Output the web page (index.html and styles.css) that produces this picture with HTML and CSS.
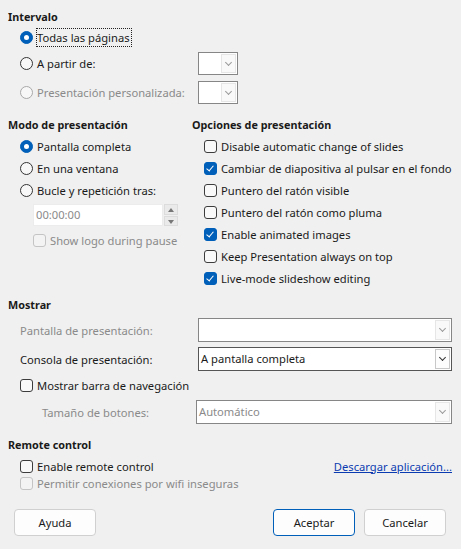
FILE: index.html
```html
<!DOCTYPE html>
<html lang="es">
<head>
<meta charset="utf-8">
<link rel="stylesheet" href="styles.css">
</head>
<body>
<div class="dialog">
  <div class="h h-first">Intervalo</div>
  <div class="indent">
    <div class="row r20"><span class="radio on"></span><span class="lbl focus">Todas las páginas</span></div>
    <div class="row r23 mt5"><span class="radio"></span><span class="lbl w-label">A partir de:</span><span class="combo small"><span class="arrow"></span></span></div>
    <div class="row r23 mt6 dis"><span class="radio"></span><span class="lbl w-label">Presentación personalizada:</span><span class="combo small"><span class="arrow"></span></span></div>
  </div>

  <div class="cols">
    <div class="col-left">
      <div class="h">Modo de presentación</div>
      <div class="indent">
        <div class="row r22"><span class="radio on"></span><span class="lbl">Pantalla completa</span></div>
        <div class="row r22"><span class="radio"></span><span class="lbl">En una ventana</span></div>
        <div class="row r22"><span class="radio"></span><span class="lbl">Bucle y repetición tras:</span></div>
        <div class="spinrow">
          <span class="spin"><span class="spintext">00:00:00</span></span>
          <span class="spinbtns"><span class="sb up"></span><span class="sb down"></span></span>
        </div>
        <div class="row r22 dis sub"><span class="check"></span><span class="lbl">Show logo during pause</span></div>
      </div>
    </div>
    <div class="col-right">
      <div class="h">Opciones de presentación</div>
      <div class="indent">
        <div class="row r22"><span class="check"></span><span class="lbl">Disable automatic change of slides</span></div>
        <div class="row r22"><span class="check on"></span><span class="lbl">Cambiar de diapositiva al pulsar en el fondo</span></div>
        <div class="row r22"><span class="check"></span><span class="lbl">Puntero del ratón visible</span></div>
        <div class="row r22"><span class="check"></span><span class="lbl">Puntero del ratón como pluma</span></div>
        <div class="row r22"><span class="check on"></span><span class="lbl">Enable animated images</span></div>
        <div class="row r22"><span class="check"></span><span class="lbl">Keep Presentation always on top</span></div>
        <div class="row r22"><span class="check on"></span><span class="lbl">Live-mode slideshow editing</span></div>
      </div>
    </div>
  </div>

  <div class="h h-mostrar">Mostrar</div>
  <div class="indent2">
    <div class="frow dis"><span class="flbl">Pantalla de presentación:</span><span class="combo wide"><span class="val"></span><span class="arrow"></span></span></div>
    <div class="frow mt5"><span class="flbl">Consola de presentación:</span><span class="combo wide active"><span class="val">A pantalla completa</span><span class="arrow"></span></span></div>
    <div class="row r20 mt4"><span class="check"></span><span class="lbl">Mostrar barra de navegación</span></div>
    <div class="frow mt3 dis"><span class="flbl flbl2">Tamaño de botones:</span><span class="combo wide2"><span class="val">Automático</span><span class="arrow"></span></span></div>
  </div>

  <div class="h h-remote">Remote control</div>
  <div class="indent2">
    <div class="row r18 between"><span class="rowl"><span class="check"></span><span class="lbl">Enable remote control</span></span><a class="link" href="#">Descargar aplicación...</a></div>
    <div class="row r16 dis"><span class="check"></span><span class="lbl">Permitir conexiones por wifi inseguras</span></div>
  </div>

  <div class="buttons">
    <span class="btn">Ayuda</span>
    <span class="spacer"></span>
    <span class="btn default">Aceptar</span>
    <span class="btn">Cancelar</span>
  </div>
</div>
</body>
</html>
```

FILE: styles.css
```css
html, body {
  margin: 0;
  padding: 0;
  background: #f0f0f0;
}
body {
  width: 461px;
  height: 549px;
  overflow: hidden;
  font-family: "Noto Sans", "Open Sans", sans-serif;
  font-size: 11.2px;
  color: #1a1a1a;
}
.dialog {
  padding: 0 9px 0 8px;
}
.h {
  font-weight: bold;
  font-size: 10.8px;
  height: 16px;
  line-height: 16px;
  white-space: nowrap;
}
.h-first { padding-top: 9px; }
.indent { padding-left: 12px; padding-top: 2px; }
.indent2 { padding-left: 12px; }
.row {
  display: flex;
  align-items: center;
}
.r16 { height: 16px; }
.r18 { height: 18px; }
.r20 { height: 20px; }
.r22 { height: 22px; }
.r23 { height: 23px; }
.mt3 { margin-top: 3px; }
.mt4 { margin-top: 4px; }
.mt5 { margin-top: 5px; }
.mt6 { margin-top: 6px; }
.lbl {
  margin-left: 4px;
  white-space: nowrap;
}
.focus {
  outline: 1px dotted #222;
  outline-offset: 0;
  padding: 1px 1px 1px 0;
}
.w-label { width: 161px; }
.dis { color: #8a8a8a; }

.radio {
  width: 11px;
  height: 11px;
  border: 1px solid #333;
  border-radius: 50%;
  background: #f7f7f7;
  flex: none;
  position: relative;
}
.dis .radio { border-color: #a8a8a8; }
.radio.on {
  background: #005fb8;
  border-color: #005fb8;
}
.radio.on::after {
  content: "";
  position: absolute;
  left: 3px;
  top: 3px;
  width: 5px;
  height: 5px;
  border-radius: 50%;
  background: #fff;
}
.check {
  width: 11px;
  height: 11px;
  border: 1px solid #3c3c3c;
  border-radius: 3px;
  background: #f9f9f9;
  flex: none;
  position: relative;
}
.dis .check { border-color: #c4c4c4; background: #f3f3f3; }
.check.on {
  background: #005fb8;
  border-color: #005fb8;
}
.check.on::after {
  content: "";
  position: absolute;
  left: 3px;
  top: 1px;
  width: 3px;
  height: 6px;
  border-right: 1px solid #fff;
  border-bottom: 1px solid #fff;
  transform: rotate(40deg);
}

.combo {
  display: flex;
  justify-content: flex-end;
  align-items: stretch;
  box-sizing: border-box;
  border: 1px solid #868686;
  background: #fff;
  padding: 1px;
}
.combo.small { width: 40px; height: 23px; }
.combo.wide { width: 254px; height: 24px; }
.combo.wide2 { width: 256px; height: 24px; margin-left: -2px; }
.combo.active { border-color: #555; }
.combo .val {
  flex: 1;
  line-height: 20px;
  padding-left: 1px;
  white-space: nowrap;
}
.arrow {
  width: 15px;
  box-sizing: border-box;
  border: 1px solid #e6e6e6;
  background: #f9f9f9;
  position: relative;
  flex: none;
}
.combo.active .arrow { border-color: #c8c8c8; background: #fdfdfd; }
.arrow::after {
  content: "";
  position: absolute;
  left: 4px;
  top: 5px;
  width: 4px;
  height: 4px;
  border-right: 1px solid #9a9a9a;
  border-bottom: 1px solid #9a9a9a;
  transform: rotate(45deg);
}
.combo.active .arrow::after { border-color: #333; }

.cols {
  display: flex;
  margin-top: 13px;
}
.col-left { width: 184px; flex: none; }
.col-right { flex: 1; min-width: 0; }
.col-right .indent { padding-left: 12px; }

.spinrow {
  display: flex;
  margin: 3px 0 0 13px;
  height: 22px;
}
.spin {
  width: 130px;
  background: #fff;
  border: 1px solid #ececec;
  box-sizing: border-box;
  color: #8a8a8a;
  line-height: 20px;
  padding-left: 2px;
}
.spinbtns {
  display: flex;
  flex-direction: column;
  width: 14px;
  margin-left: 1px;
  gap: 1px;
}
.sb {
  flex: 1;
  background: #eaeaea;
  border: 1px solid #dcdcdc;
  position: relative;
}
.sb::after {
  content: "";
  position: absolute;
  left: 3px;
  width: 0;
  height: 0;
  border-left: 3.5px solid transparent;
  border-right: 3.5px solid transparent;
}
.sb.up::after { top: 3px; border-bottom: 4px solid #777; }
.sb.down::after { top: 3px; border-top: 4px solid #777; }
.sub { margin-left: 13px; margin-top: 3px; }

.h-mostrar { margin-top: 8px; }
.frow {
  display: flex;
  align-items: center;
  margin-top: 5px;
}
.flbl {
  width: 178px;
  white-space: nowrap;
}
.flbl2 { padding-left: 22px; width: 156px; }

.h-remote { margin-top: 13px; }
.between { justify-content: space-between; margin-top: 4px; }
.rowl { display: flex; align-items: center; }
.link {
  color: #0b3bb0;
  text-decoration: underline;
}

.buttons {
  display: flex;
  gap: 9px;
  margin-top: 18px;
  padding: 0 6px;
}
.spacer { flex: 1; }
.btn {
  width: 82px;
  height: 27px;
  box-sizing: border-box;
  border: 1px solid #d0d0d0;
  border-radius: 4px;
  background: #fdfdfd;
  display: flex;
  align-items: center;
  justify-content: center;
}
.btn.default { border-color: #005fb8; }
```
